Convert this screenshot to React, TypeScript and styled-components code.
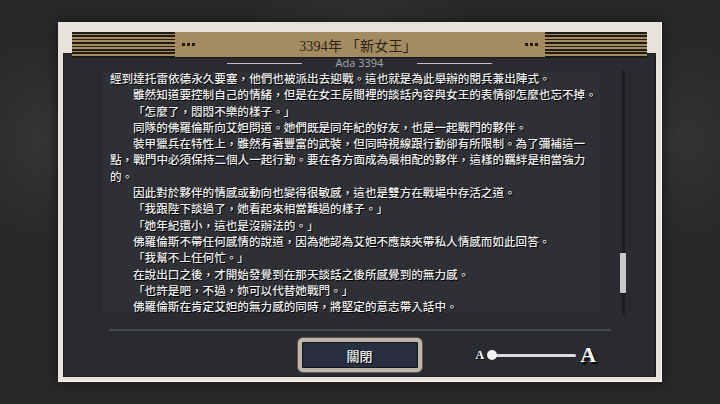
import React from "react";
import styled, { createGlobalStyle } from "styled-components";

const Global = createGlobalStyle`
  html, body { margin: 0; padding: 0; background: #272727; }
  body { width: 720px; height: 404px; overflow: hidden; }
`;

const Page = styled.div`
  width: 720px;
  height: 404px;
  box-sizing: border-box;
  padding: 22px 0 0 58px;
  background:
    radial-gradient(ellipse 80px 110px at 40px 140px, rgba(255, 255, 255, 0.06), transparent),
    radial-gradient(ellipse 80px 110px at 685px 140px, rgba(255, 255, 255, 0.05), transparent),
    radial-gradient(ellipse 120px 60px at 360px 8px, rgba(255, 255, 255, 0.03), transparent),
    #282828;
`;

const Frame = styled.div`
  width: 604px;
  height: 360px;
  box-sizing: border-box;
  display: flex;
  flex-direction: column;
  padding: 10px 0 5px;
  background: #e7e2da;
  box-shadow: 0 0 10px rgba(0, 0, 0, 0.55), inset -1px -1px 0 #fdfbf7;
`;

const Header = styled.div`
  position: relative;
  z-index: 1;
  height: 25px;
  margin: 0 15px 0 14px;
  display: flex;
  align-items: center;
  background: #a48b60;
  box-shadow: 0 1px 0 rgba(0, 0, 0, 0.4);
`;

const Stripes = styled.div<{ $w: number }>`
  width: ${(p) => p.$w}px;
  align-self: stretch;
  background: repeating-linear-gradient(
    to bottom,
    #1f1a12 0 1.6px,
    #a48b60 1.6px 3.4px
  );
`;

const Dots = styled.div<{ $side: "l" | "r" }>`
  display: flex;
  gap: 2px;
  margin: ${(p) => (p.$side === "l" ? "0 0 0 7px" : "0 7px 0 0")};
`;

const Dot = styled.span`
  width: 3px;
  height: 3px;
  background: #211b12;
`;

const Title = styled.div`
  flex: 1;
  text-align: center;
  font-family: "Liberation Serif", "Noto Sans CJK TC", serif;
  font-size: 14px;
  color: #2a2216;
  letter-spacing: 0.2px;
  padding-right: 4px;
`;

const Panel = styled.div`
  flex: 1;
  margin: -4px 6px 0 5px;
  background: #2a2b30;
  box-shadow: inset 0 0 0 1px #1c1d21;
  display: flex;
  flex-direction: column;
  padding: 4px 0 5px;
`;

const SubRow = styled.div`
  height: 12px;
  display: flex;
  align-items: center;
  justify-content: center;
  gap: 34px;
`;

const Rule = styled.div`
  width: 75px;
  height: 1px;
  background: #c4c4c4;
`;

const SubLabel = styled.div`
  font-family: "Open Sans", sans-serif;
  font-size: 11px;
  line-height: 12px;
  color: #a6a8ac;
`;

const Body = styled.div`
  display: flex;
  margin: 2px 0 0 40px;
  height: 242px;
`;

const TextBox = styled.div`
  width: 497px;
  box-sizing: border-box;
  padding-left: 7px;
  background: #2f3036;
`;

const Lines = styled.div`
  margin-top: -1px;
`;

const Line = styled.div<{ $indent: boolean }>`
  white-space: nowrap;
  font-family: "Noto Sans CJK TC", sans-serif;
  font-weight: 500;
  font-size: 11.6px;
  line-height: 16.3px;
  color: #f4f4f4;
  text-shadow: 1px 1px 0 #000, 0 0 1px #000;
  padding-left: ${(p) => (p.$indent ? "23px" : "0")};
`;

const ScrollTrack = styled.div`
  position: relative;
  width: 3px;
  height: 245px;
  margin: -1px 0 0 22px;
  background: #1d1e22;
`;

const ScrollThumb = styled.div`
  position: absolute;
  left: -2px;
  top: 183px;
  width: 6px;
  height: 40px;
  border-radius: 1px;
  background: #cacaca;
  box-shadow: 0 1px 0 #111;
`;

const Divider = styled.div`
  width: 502px;
  height: 2px;
  margin: 16px 0 0 46px;
  background: #454a52;
`;

const BottomRow = styled.div`
  display: grid;
  grid-template-columns: 1fr auto 1fr;
  align-items: center;
  height: 34px;
  margin-top: 7px;
`;

const CloseButton = styled.button`
  grid-column: 2;
  width: 124px;
  height: 34px;
  box-sizing: border-box;
  border: 4px solid #bdb7ab;
  border-radius: 5px;
  background: #273041;
  box-shadow: inset 0 0 0 1px #12151b, 0 0 0 1px #5e5a52;
  color: #f2f2f2;
  font-family: "Noto Sans CJK TC", sans-serif;
  font-weight: 500;
  font-size: 13px;
  text-shadow: 1px 1px 0 #000;
  padding: 0;
`;

const SizeControl = styled.div`
  grid-column: 3;
  justify-self: start;
  margin-left: 54px;
  display: flex;
  align-items: center;
`;

const SmallA = styled.span`
  font-family: "Liberation Serif", serif;
  font-weight: 700;
  font-size: 12px;
  color: #fff;
  text-shadow: 1px 1px 0 #000;
`;

const Track = styled.div`
  position: relative;
  width: 86px;
  height: 3px;
  margin-left: 6px;
  border-radius: 2px;
  background: #dcdcdc;
`;

const Knob = styled.div`
  position: absolute;
  left: -3px;
  top: -3.5px;
  width: 10px;
  height: 10px;
  border-radius: 50%;
  background: #f2f2f2;
`;

const BigA = styled.span`
  margin-left: 4px;
  font-family: "Liberation Serif", serif;
  font-weight: 700;
  font-size: 22px;
  line-height: 22px;
  color: #fff;
  text-shadow: 2px 2px 0 #000;
`;

const TEXT: [string, boolean][] = [
  ["經到達托雷依德永久要塞，他們也被派出去迎戰。這也就是為此舉辦的閱兵兼出陣式。", false],
  ["雖然知道要控制自己的情緒，但是在女王房間裡的談話內容與女王的表情卻怎麼也忘不掉。", true],
  ["「怎麼了，悶悶不樂的樣子。」", true],
  ["同隊的佛羅倫斯向艾妲問道。她們既是同年紀的好友，也是一起戰門的夥伴。", true],
  ["裝甲獵兵在特性上，雖然有著豐富的武裝，但同時視線跟行動卻有所限制。為了彌補這一", true],
  ["點，戰門中必須保持二個人一起行動。要在各方面成為最相配的夥伴，這樣的羈絆是相當強力", false],
  ["的。", false],
  ["因此對於夥伴的情感或動向也變得很敏感，這也是雙方在戰場中存活之道。", true],
  ["「我跟陛下談過了，她看起來相當難過的樣子。」", true],
  ["「她年紀還小，這也是沒辦法的。」", true],
  ["佛羅倫斯不帶任何感情的說道，因為她認為艾妲不應該夾帶私人情感而如此回答。", true],
  ["「我幫不上任何忙。」", true],
  ["在說出口之後，才開始發覺到在那天談話之後所感覺到的無力感。", true],
  ["「也許是吧，不過，妳可以代替她戰門。」", true],
  ["佛羅倫斯在肯定艾妲的無力感的同時，將堅定的意志帶入話中。", true],
];

export default function App() {
  return (
    <>
      <Global />
      <Page>
        <Frame>
          <Header>
            <Stripes $w={103} />
            <Dots $side="l">
              <Dot />
              <Dot />
              <Dot />
            </Dots>
            <Title>3394年 「新女王」</Title>
            <Dots $side="r">
              <Dot />
              <Dot />
              <Dot />
            </Dots>
            <Stripes $w={102} />
          </Header>
          <Panel>
            <SubRow>
              <Rule />
              <SubLabel>Ada 3394</SubLabel>
              <Rule />
            </SubRow>
            <Body>
              <TextBox>
                <Lines>
                  {TEXT.map(([t, indent], i) => (
                    <Line key={i} $indent={indent}>
                      {t}
                    </Line>
                  ))}
                </Lines>
              </TextBox>
              <ScrollTrack>
                <ScrollThumb />
              </ScrollTrack>
            </Body>
            <Divider />
            <BottomRow>
              <CloseButton>關閉</CloseButton>
              <SizeControl>
                <SmallA>A</SmallA>
                <Track>
                  <Knob />
                </Track>
                <BigA>A</BigA>
              </SizeControl>
            </BottomRow>
          </Panel>
        </Frame>
      </Page>
    </>
  );
}
